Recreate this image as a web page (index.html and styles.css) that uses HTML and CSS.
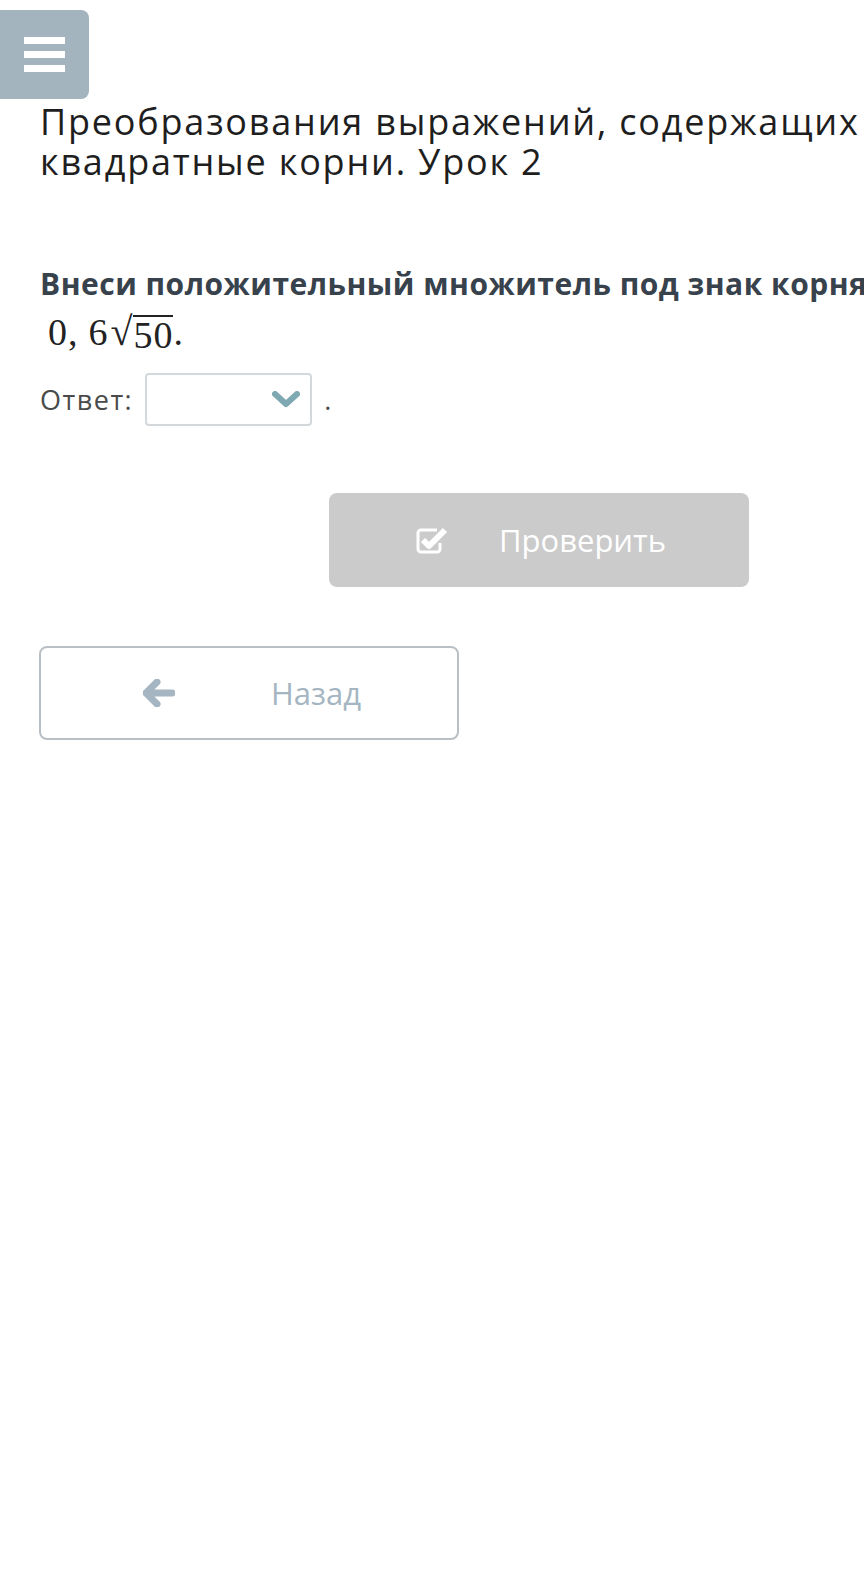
FILE: index.html
```html
<!DOCTYPE html>
<html lang="ru">
<head>
  <meta charset="UTF-8" />
  <meta name="viewport" content="width=device-width, initial-scale=1.0" />
  <title>Преобразования выражений</title>
  <link rel="stylesheet" href="styles.css">
</head>
<body>
  <button class="menu-btn" aria-label="Меню">
    <span></span><span></span><span></span>
  </button>

  <div class="content">
    <h1 class="lesson-title">Преобразования выражений, содержащих квадратные корни. Урок 2</h1>

    <p class="task">Внеси положительный множитель под знак корня:</p>
    <div class="math">
      <span>0,</span><span class="gap">6</span><span class="radical">√</span><span class="radicand">50</span><span>.</span>
    </div>

    <div class="answer">
      <span class="answer-label">Ответ:</span>
      <div class="select">
        <svg class="chevron" viewBox="0 0 28 18" width="28" height="18">
          <path d="M3 3 L14 13 L25 3" fill="none" stroke="currentColor" stroke-width="6" stroke-linecap="round" stroke-linejoin="round"/>
        </svg>
      </div>
      <span class="dot">.</span>
    </div>

    <div class="actions">
      <button class="btn-check" disabled>
        <svg viewBox="0 0 34 32" width="34" height="32">
          <path d="M22 6 H6 a3 3 0 0 0 -3 3 v16 a3 3 0 0 0 3 3 h16 a3 3 0 0 0 3 -3 v-6" fill="none" stroke="currentColor" stroke-width="3"/>
          <path d="M8 16 L14 22 L30 6" fill="none" stroke="currentColor" stroke-width="6" stroke-linejoin="round"/>
        </svg>
        <span>Проверить</span>
      </button>
    </div>

    <button class="btn-back">
      <svg viewBox="0 0 32 28" width="32" height="28">
        <path d="M14 3 L3 14 L14 25 M4 14 H29" fill="none" stroke="currentColor" stroke-width="7" stroke-linecap="round" stroke-linejoin="round"/>
      </svg>
      <span>Назад</span>
    </button>
  </div>
</body>
</html>
```

FILE: styles.css
```css
:root {
  --menu: #a3b4bf;
  --text: #1e1e1e;
  --task: #38424c;
  --muted: #4a4a4a;
  --disabled: #cbcbcb;
  --back: #a5b6c2;
  --chevron: #7ea8b2;
}
* {
  margin: 0;
  padding: 0;
  box-sizing: border-box;
}
body {
  font-family: 'Open Sans', sans-serif;
  background: #fff;
  color: var(--text);
  overflow-x: hidden;
}
.menu-btn {
  display: flex;
  flex-direction: column;
  justify-content: center;
  gap: 7px;
  margin-top: 10px;
  width: 89px;
  height: 89px;
  padding: 0 24px;
  border: none;
  border-radius: 0 8px 8px 0;
  background: var(--menu);
}
.menu-btn span {
  display: block;
  height: 7px;
  background: #fff;
}
.content {
  padding-left: 40px;
}
.lesson-title {
  margin-top: 3px;
  font-size: 36px;
  font-weight: 400;
  line-height: 40px;
  letter-spacing: 1.8px;
  color: var(--text);
  width: 830px;
}
.task {
  margin-top: 84px;
  font-size: 30px;
  font-weight: 700;
  line-height: 36px;
  letter-spacing: 0.5px;
  color: var(--task);
  white-space: nowrap;
}
.math {
  display: flex;
  align-items: flex-end;
  margin-top: 9px;
  margin-left: 8px;
  font-family: 'Liberation Serif', 'DejaVu Serif', serif;
  font-size: 38px;
  line-height: 42px;
  letter-spacing: 1px;
  color: #222;
}
.math .gap {
  margin-left: 10px;
}
.math .radical {
  font-size: 40px;
  margin-left: 2px;
}
.math .radicand {
  border-top: 2px solid #222;
  margin-top: 2px;
  line-height: 36px;
}
.answer {
  display: flex;
  align-items: center;
  margin-top: 20px;
  font-size: 27px;
  letter-spacing: 1.5px;
  color: var(--muted);
}
.answer-label {
  margin-right: 12px;
}
.select {
  display: flex;
  align-items: center;
  justify-content: flex-end;
  width: 167px;
  height: 53px;
  padding-right: 10px;
  border: 2px solid #d4d8da;
  border-radius: 4px;
}
.chevron {
  color: var(--chevron);
}
.dot {
  margin-left: 12px;
}
.actions {
  display: flex;
  margin-top: 67px;
  padding-left: 289px;
}
.btn-check {
  display: flex;
  align-items: center;
  gap: 50px;
  width: 420px;
  height: 94px;
  padding-left: 86px;
  border: none;
  border-radius: 8px;
  background: var(--disabled);
  color: #fff;
  font-family: 'Open Sans', sans-serif;
  font-size: 31px;
}
.btn-back {
  display: flex;
  align-items: center;
  gap: 96px;
  margin-top: 59px;
  margin-left: -1px;
  width: 420px;
  height: 94px;
  padding-left: 102px;
  border: 2px solid #b9c0c5;
  border-radius: 8px;
  background: #fff;
  color: var(--back);
  font-family: 'Open Sans', sans-serif;
  font-size: 31px;
}
```
